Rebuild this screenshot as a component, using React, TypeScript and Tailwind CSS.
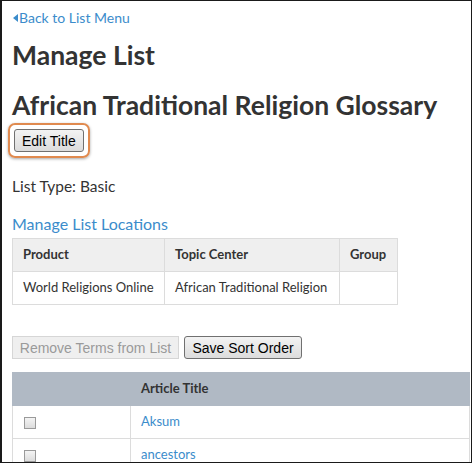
const link = 'text-[#3b8ccb]';

function Checkbox() {
  return (
    <span className="inline-block w-[12px] h-[12px] border border-[#9a9a9a] bg-gradient-to-b from-[#f4f4f4] to-[#dcdcdc] align-middle" />
  );
}

export default function App() {
  const terms = ['Aksum', 'ancestors'];

  return (
    <div
      className="w-[472px] h-[463px] overflow-hidden bg-white border border-[#1a1a1a] border-l-2 text-[#333]"
      style={{ fontFamily: 'Lato, "Open Sans", sans-serif' }}
    >
      <div className="pl-[10px] pt-[8px]">
        <a className={`${link} text-[14px] flex items-center leading-[18px]`}>
          <span className="inline-block w-0 h-0 border-y-[4px] border-y-transparent border-r-[5px] border-r-[#3b8ccb] ml-[1px] mr-[1px]" />
          Back to List Menu
        </a>

        <h1 className="text-[26.5px] font-bold leading-[30px] mt-[13px]">Manage List</h1>
        <h2 className="text-[26.5px] font-bold leading-[30px] mt-[20px] whitespace-nowrap">African Traditional Religion Glossary</h2>

        <div className="mt-[3px] ml-[-4px] inline-block rounded-[7px] border-2 border-[#e08a4f] p-[4px] shadow-[0_1px_3px_rgba(0,0,0,0.35)]">
          <button
            className="block h-[23px] px-[7px] rounded-[3px] border border-[#707070] bg-gradient-to-b from-[#f3f3f3] to-[#dcdcdc] text-[14px] text-black leading-none"
            style={{ fontFamily: '"Liberation Sans", Arial, sans-serif' }}
          >
            Edit Title
          </button>
        </div>

        <p className="text-[15.5px] leading-[20px] mt-[18px]">List Type: Basic</p>

        <h3 className={`${link} text-[16px] leading-[20px] mt-[18px]`}>Manage List Locations</h3>

        <table className="mt-[4px] border-collapse text-[13px] table-fixed w-[385px]">
          <thead>
            <tr className="bg-[#efefef] h-[33px]">
              <th className="border border-[#dcdcdc] text-left font-bold px-[10px] w-[152px]">Product</th>
              <th className="border border-[#dcdcdc] text-left font-bold px-[10px] w-[175px]">Topic Center</th>
              <th className="border border-[#dcdcdc] text-left font-bold px-[10px] w-[58px]">Group</th>
            </tr>
          </thead>
          <tbody>
            <tr className="h-[33px]">
              <td className="border border-[#dcdcdc] px-[10px] whitespace-nowrap">World Religions Online</td>
              <td className="border border-[#dcdcdc] px-[10px] whitespace-nowrap">African Traditional Religion</td>
              <td className="border border-[#dcdcdc] px-[10px]"></td>
            </tr>
          </tbody>
        </table>

        <div
          className="flex gap-[5px] mt-[31px] text-[14px] leading-none"
          style={{ fontFamily: '"Liberation Sans", Arial, sans-serif' }}
        >
          <button className="h-[23px] w-[167px] border border-[#d6d6d6] bg-[#efefef] text-[#9a9a9a]">
            Remove Terms from List
          </button>
          <button className="h-[23px] w-[118px] rounded-[3px] border border-[#707070] bg-gradient-to-b from-[#f3f3f3] to-[#dcdcdc] text-black">
            Save Sort Order
          </button>
        </div>

        <table className="mt-[13px] border-collapse text-[13px] w-[458px]">
          <thead>
            <tr className="bg-[#b0b9c4] h-[33px]">
              <th className="border border-[#b0b9c4] w-[118px]"></th>
              <th className="border border-[#b0b9c4] text-left font-bold px-[10px]">Article Title</th>
            </tr>
          </thead>
          <tbody>
            {terms.map(t => (
              <tr key={t} className="h-[33px]">
                <td className="border border-[#dcdcdc] pl-[11px]">
                  <Checkbox />
                </td>
                <td className="border border-[#dcdcdc] px-[10px]">
                  <a className={link}>{t}</a>
                </td>
              </tr>
            ))}
          </tbody>
        </table>
      </div>
    </div>
  );
}
